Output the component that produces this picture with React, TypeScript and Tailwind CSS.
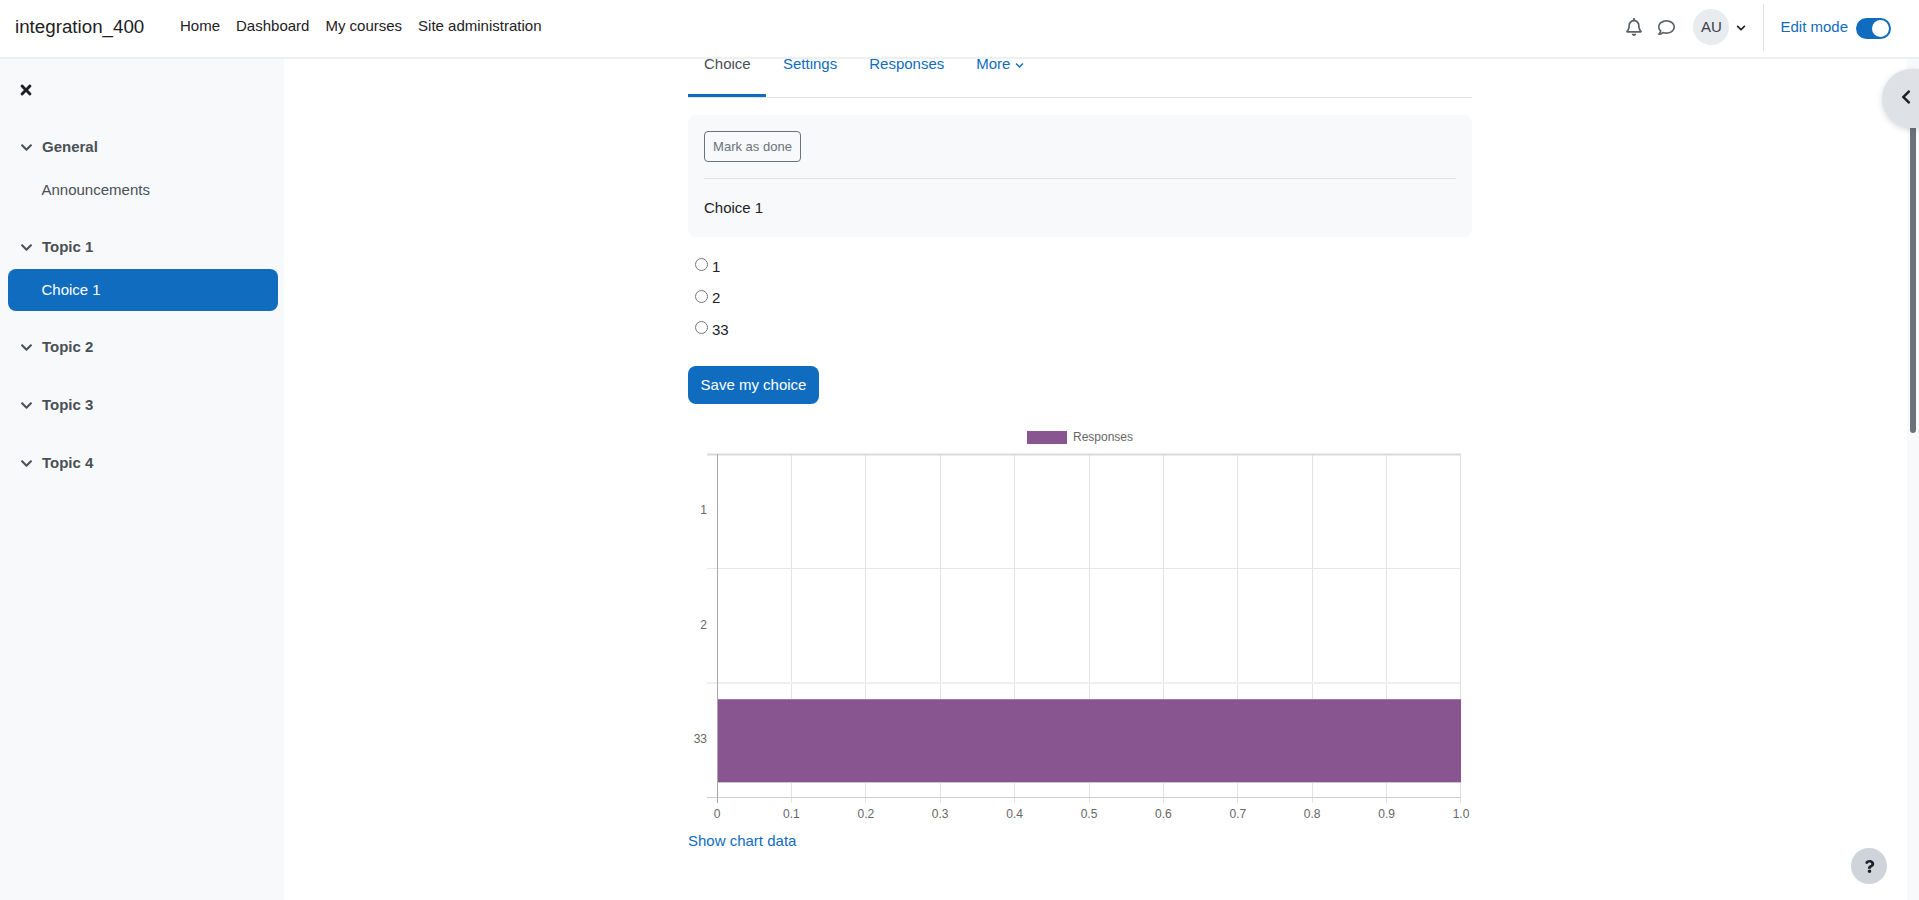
import { FaChevronDown, FaChevronLeft, FaQuestion, FaRegBell, FaRegComment, FaTimes } from 'react-icons/fa'

const navLinks = ['Home', 'Dashboard', 'My courses', 'Site administration']

function Header() {
  return (
    <header className="relative z-10 flex h-[59px] shrink-0 items-center border-b-2 border-[#eeeff0] bg-white pl-[15px] text-[15px]">
      <a className="mb-[4px] mr-[36px] w-[129px] text-[18.75px] leading-[28px] text-[#1d2125]">integration_400</a>
      <nav className="mb-[4px] flex gap-[16px] text-[#1d2125]">
        {navLinks.map(l => (
          <a key={l}>{l}</a>
        ))}
      </nav>
      <div className="ml-auto flex h-full items-center pb-[3px] pr-[28px]">
        <FaRegBell className="mr-[15px] text-[18px] text-[#5b6268]" />
        <FaRegComment className="mr-[18.5px] text-[17px] text-[#5b6268]" />
        <div className="flex h-9 w-9 items-center justify-center rounded-full bg-[#e9ecef] text-[#3a4046]">AU</div>
        <FaChevronDown className="ml-[7px] mt-[2px] text-[10px] text-[#1d2125]" />
        <div className="ml-[17px] mr-[16px] h-[47px] w-px self-center bg-[#dee2e6]" />
        <span className="text-[#0f6cbf]">Edit mode</span>
        <div className="ml-[8px] mt-[3px] flex h-[21px] w-[35px] items-center justify-end rounded-full bg-[#0f6cbf] pr-[2px]">
          <div className="h-[17px] w-[17px] rounded-full bg-white" />
        </div>
      </div>
    </header>
  )
}

function SideSection({ title, children }: { title: string; children?: React.ReactNode }) {
  return (
    <div className="mb-[36px]">
      <div className="flex h-[22px] items-center pl-[20px] font-bold text-[#495057]">
        <FaChevronDown className="mr-[9px] text-[13px]" />
        {title}
      </div>
      {children}
    </div>
  )
}

function Sidebar() {
  return (
    <aside className="w-[284px] shrink-0 bg-[#f8f9fa] text-[15px]">
      <div className="flex h-[61px] items-center pl-[19px]">
        <FaTimes className="-ml-[1px] text-[16px] text-[#1d2125]" />
      </div>
      <div className="pt-[16px]">
        <SideSection title="General">
          <div className="mt-[21px] pl-[41.5px] leading-[22px] text-[#495057]">Announcements</div>
        </SideSection>
        <div className="-mb-[11px] -mt-[1px]">
          <SideSection title="Topic 1">
            <div className="mx-[8px] mt-[11px] flex h-[42px] w-[270px] items-center rounded-lg bg-[#0f6cbf] pl-[33.5px] text-white">
              Choice 1
            </div>
          </SideSection>
        </div>
        <SideSection title="Topic 2" />
        <SideSection title="Topic 3" />
        <SideSection title="Topic 4" />
      </div>
    </aside>
  )
}

function Tabs() {
  return (
    <div className="flex border-b border-[#dee2e6] leading-[10px] text-[#0f6cbf]">
      <a className="w-[78px] border-b-[3px] border-[#0f6cbf] px-4 pb-[25px] text-[#495057]">Choice</a>
      <a className="ml-px px-4">Settings</a>
      <a className="px-4">Responses</a>
      <a className="flex h-[10px] items-center px-4">
        More
        <FaChevronDown className="ml-[5px] mt-[2px] text-[9px]" />
      </a>
    </div>
  )
}

const ticksX = ['0', '0.1', '0.2', '0.3', '0.4', '0.5', '0.6', '0.7', '0.8', '0.9', '1.0']

// chart.js canvas in the original, coordinates are relative to the svg's origin (688, 420)
function Chart() {
  const left = 29
  const right = 773
  const step = 74.4
  const grid = ticksX.slice(1, -1).map((_, i) => Math.floor(left + step * (i + 1)))
  return (
    <svg width="784" height="405" className="mt-4 block" style={{ fontFamily: '"Liberation Sans", sans-serif' }}>
      <rect x="339" y="11" width="40" height="13" fill="#885590" />
      <text x="385" y="21" fontSize="12" fill="#666666">Responses</text>

      {grid.map(x => (
        <line key={x} x1={x + 0.5} x2={x + 0.5} y1="34" y2="383" stroke="#e3e3e3" />
      ))}
      <line x1="19" x2={right} y1="34.5" y2="34.5" stroke="#d9d9d9" strokeWidth="2" />
      <line x1="19" x2={right} y1="148.5" y2="148.5" stroke="#e6e6e6" />
      <line x1="19" x2={right} y1="263" y2="263" stroke="#efefef" strokeWidth="2" />
      <line x1={right - 0.5} x2={right - 0.5} y1="34" y2="383" stroke="#dedede" />

      <rect x={left} y="279" width={right - left} height="83" fill="#885590" />
      <line x1={left} x2={right} y1="279.5" y2="279.5" stroke="#a27aa7" />
      <line x1={left} x2={right} y1="362.5" y2="362.5" stroke="#d2c0d5" />

      <line x1="19" x2={right} y1="377.5" y2="377.5" stroke="#cccccc" />
      <line x1={left + 0.5} x2={left + 0.5} y1="34" y2="383" stroke="#a8a8a8" />

      <text x="19" y="94" fontSize="12" fill="#666666" textAnchor="end">1</text>
      <text x="19" y="209" fontSize="12" fill="#666666" textAnchor="end">2</text>
      <text x="19" y="323" fontSize="12" fill="#666666" textAnchor="end">33</text>

      {ticksX.map((t, i) => (
        <text key={t} x={left + step * i} y="398" fontSize="12" fill="#666666" textAnchor="middle">{t}</text>
      ))}
    </svg>
  )
}

function Content() {
  return (
    <main className="min-w-0 flex-1 pl-[404px] text-[15px]">
      <div className="w-[784px]">
        <Tabs />
        <div className="mt-[17px] rounded-lg bg-[#f8f9fa] px-4 pt-4 pb-[18px]">
          <button className="h-[31px] w-[97px] rounded border border-[#6a737b] pt-px text-[13px] text-[#6a737b]">Mark as done</button>
          <div className="mt-4 border-t border-[#dee2e6] pt-[17.5px] leading-[22.5px] text-[#1d2125]">Choice 1</div>
        </div>

        <div className="mt-[14px] pl-[7px] text-[#1d2125]">
          {['1', '2', '33'].map(o => (
            <label key={o} className="flex h-[31.5px] items-center gap-[4px]">
              <input type="radio" name="choice" className="-mt-[4px] h-[13px] w-[13px]" />
              {o}
            </label>
          ))}
        </div>

        <button className="mt-[20.5px] h-[38px] w-[131px] rounded-lg bg-[#0f6cbf] pt-px text-white">Save my choice</button>

        <Chart />
        <a className="mt-[5px] block leading-[22.5px] text-[#0f6cbf]">Show chart data</a>
      </div>
    </main>
  )
}

export default function App() {
  return (
    <div className="relative flex h-[900px] flex-col overflow-hidden bg-white font-['Liberation_Sans',sans-serif]">
      <Header />
      <div className="flex min-h-0 flex-1">
        <Sidebar />
        <Content />
        {/* fake scrollbar */}
        <div className="w-[12px] shrink-0 bg-[#f8f9fa] pl-[3px] pt-[69px]">
          <div className="h-[305px] w-[6px] rounded-b-sm bg-[#6a737b]" />
        </div>
      </div>

      <button className="absolute right-0 top-[69px] z-20 flex h-[59px] w-[37px] items-center rounded-l-full bg-[#dee2e6] pb-[3px] pl-[16px] text-[16px] text-[#1d2125] shadow-[0_2px_6px_rgba(0,0,0,0.15)]">
        <FaChevronLeft />
      </button>
      <button className="absolute bottom-[16px] right-[32px] z-20 flex h-9 w-9 items-center justify-center rounded-full bg-[#ced4da] text-[13px] text-[#1d2125]">
        <FaQuestion />
      </button>
    </div>
  )
}
